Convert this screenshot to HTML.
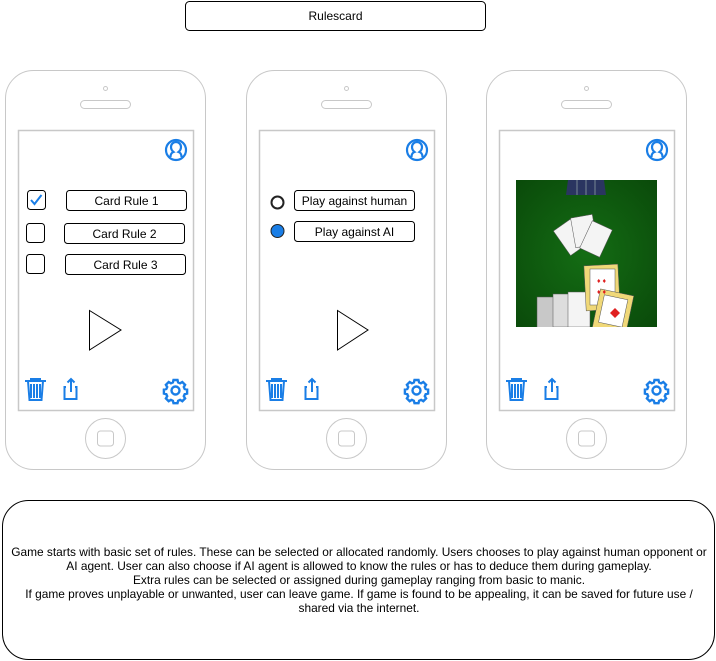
<!DOCTYPE html>
<html><head><style>
html,body{margin:0;padding:0;background:#fff;width:716px;height:661px;overflow:hidden}
svg{display:block;font-family:"Liberation Sans",Arial,sans-serif}
</style></head><body>
<svg width="716" height="661" viewBox="0 0 716 661">
<defs>
<clipPath id="imgclip"><rect x="516" y="180" width="141" height="147"/></clipPath>
<g id="phone">
  <rect x="5.5" y="70.5" width="200" height="399" rx="28" fill="#fff" stroke="#c8c8c8"/>
  <rect x="18.5" y="130.5" width="175" height="280" fill="#fff" stroke="#c8c8c8" stroke-width="1.5"/>
  <rect x="80.5" y="100.5" width="50" height="8" rx="4" fill="none" stroke="#c8c8c8"/>
  <circle cx="105.5" cy="88.5" r="2" fill="none" stroke="#c8c8c8"/>
  <circle cx="105.5" cy="438.5" r="20" fill="none" stroke="#c8c8c8"/>
  <rect x="97.5" y="431" width="16" height="15" rx="3" fill="none" stroke="#c8c8c8"/>
  <g fill="none" stroke="#1a7ee6" stroke-width="2.2">
    <circle cx="176" cy="150" r="10"/>
    <path d="M170.5 157 q0-4 3-5 q-2.5-2 -2.5-5 a5 5 0 0 1 10 0 q0 3 -2.5 5 q3 1 3 5"/>
  </g>
  <g fill="none" stroke="#1a7ee6" stroke-width="2">
    <path d="M25 381 h21 M28 381 l1.5 19 h12 l1.5 -19 M31 384 v14 M34 384 v14 M37 384 v14 M40 384 v14 M31 381 v-2 h9 v2"/>
    <path d="M66 387 h-1.5 v12 h12 v-12 h-1.5 M71 392 v-13 M67.5 382.5 l3.5-3.5 l3.5 3.5"/>
  </g>
  <g fill="none" stroke="#1a7ee6" stroke-width="2.4">
    <circle cx="175.5" cy="390.5" r="4"/>
    <path d="M173.5 380 h4 l0.6 2.4 2 0.9 2.2-1.3 2.8 2.8 -1.3 2.2 0.9 2 2.4 0.6 v4 l-2.4 0.6 -0.9 2 1.3 2.2 -2.8 2.8 -2.2-1.3 -2 0.9 -0.6 2.4 h-4 l-0.6-2.4 -2-0.9 -2.2 1.3 -2.8-2.8 1.3-2.2 -0.9-2 -2.4-0.6 v-4 l2.4-0.6 0.9-2 -1.3-2.2 2.8-2.8 2.2 1.3 2-0.9z"/>
  </g>
</g>
<radialGradient id="felt" cx="0.5" cy="0.5" r="0.7"><stop offset="0" stop-color="#146d14"/><stop offset="1" stop-color="#0a4a0a"/></radialGradient>
</defs>

<rect x="185.5" y="1.5" width="300" height="29" rx="4" fill="#fff" stroke="#000"/>
<text x="335.5" y="20" font-size="12" text-anchor="middle">Rulescard</text>

<use href="#phone"/>
<use href="#phone" transform="translate(241,0)"/>
<use href="#phone" transform="translate(481,0)"/>

<g stroke="#000" fill="#fff">
  <rect x="27.5" y="190.5" width="18" height="19" rx="3"/>
  <rect x="26.5" y="223.5" width="18" height="19" rx="3"/>
  <rect x="26.5" y="254.5" width="18" height="19" rx="3"/>
  <rect x="66.5" y="190.5" width="120" height="20" rx="3"/>
  <rect x="64.5" y="223.5" width="120" height="20" rx="3"/>
  <rect x="65.5" y="254.5" width="120" height="20" rx="3"/>
  <path d="M89.5 310.5 L121 330 L89.5 350 Z" fill="none"/>
</g>
<path d="M31 200 l3.5 4 l7-9" fill="none" stroke="#1a7ee6" stroke-width="2"/>
<g font-size="12" text-anchor="middle">
  <text x="126.5" y="205">Card Rule 1</text>
  <text x="124.5" y="238">Card Rule 2</text>
  <text x="125.5" y="269">Card Rule 3</text>
</g>

<circle cx="277.5" cy="202.5" r="6" fill="#fff" stroke="#222" stroke-width="2"/>
<circle cx="277.5" cy="231" r="6.5" fill="#1a7ee6" stroke="#222" stroke-width="1"/>
<g stroke="#000" fill="#fff">
  <rect x="294.5" y="190.5" width="120" height="20" rx="3"/>
  <rect x="294.5" y="221.5" width="120" height="20" rx="3"/>
  <path d="M337.5 310.5 L368 330 L337.5 350 Z" fill="none"/>
</g>
<g font-size="12" text-anchor="middle">
  <text x="354.5" y="205">Play against human</text>
  <text x="354.5" y="236">Play against AI</text>
</g>

<g clip-path="url(#imgclip)">
<rect x="516" y="180" width="141" height="147" fill="url(#felt)"/>
<path d="M568 180 h36 l2 15 h-40z" fill="#2a3560"/>
<path d="M577 180 v15 M586 180 v15 M595 180 v15" stroke="#9aa" stroke-width="0.7"/>
<g stroke="#555" stroke-width="0.5" fill="#f4f4f4">
  <rect x="560" y="222" width="22" height="30" transform="rotate(-35 571 237)"/>
  <rect x="573" y="216" width="22" height="30" transform="rotate(-10 584 231)"/>
  <rect x="585" y="224" width="22" height="30" transform="rotate(25 596 239)"/>
  <rect x="537" y="297" width="22" height="32" fill="#c8c8c8"/>
  <rect x="553" y="294" width="22" height="33" fill="#ddd"/>
  <rect x="568" y="292" width="22" height="35"/>
  <rect x="585" y="265" width="34" height="45" fill="#f0d878" transform="rotate(-3 602 287)"/>
  <rect x="590" y="269" width="25" height="36" fill="#fff"/>
  <rect x="596" y="292" width="34" height="40" fill="#f0d878" transform="rotate(12 613 312)"/>
  <rect x="601" y="297" width="24" height="28" fill="#fff" transform="rotate(12 613 312)"/>
</g>
<path d="M610 313 l5 -5 l5 5 l-5 5z" fill="#e02020"/>
<g fill="#e02020" font-size="7"><text x="597" y="283">♦ ♦</text><text x="597" y="294">♦ ♦</text></g>
</g>

<rect x="2.5" y="500.5" width="712" height="159" rx="26" fill="#fff" stroke="#000"/>
<g font-size="11.9" text-anchor="middle">
  <text x="359" y="556">Game starts with basic set of rules. These can be selected or allocated randomly. Users chooses to play against human opponent or</text>
  <text x="359" y="570">AI agent. User can also choose if AI agent is allowed to know the rules or has to deduce them during gameplay.</text>
  <text x="359" y="584">Extra rules can be selected or assigned during gameplay ranging from basic to manic.</text>
  <text x="359" y="598">If game proves unplayable or unwanted, user can leave game. If game is found to be appealing, it can be saved for future use /</text>
  <text x="359" y="612">shared via the internet.</text>
</g>
</svg>
</body></html>
